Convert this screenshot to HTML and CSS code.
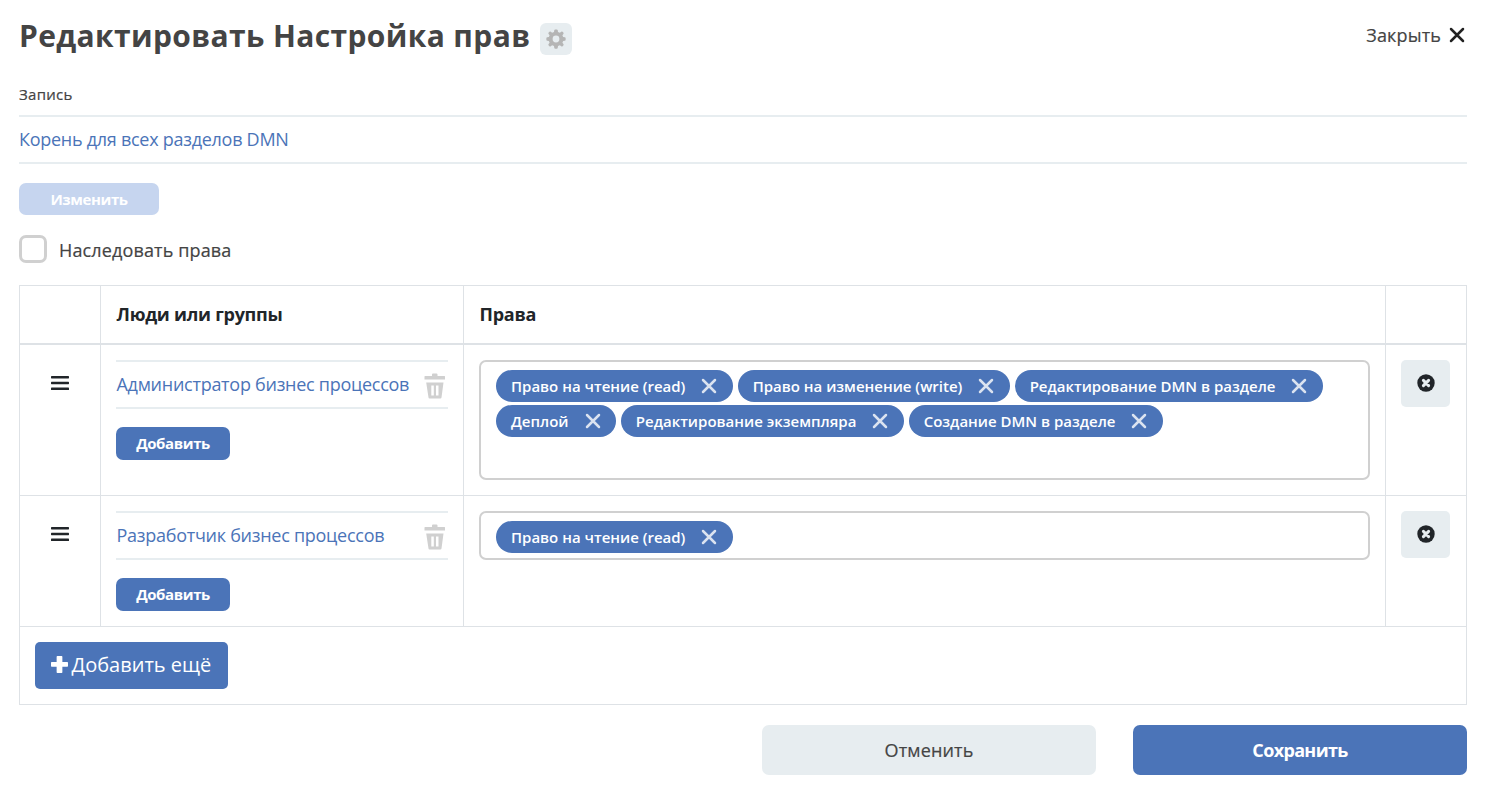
FILE: index.html
```html
<!DOCTYPE html>
<html lang="ru">
<head>
<meta charset="utf-8">
<title>Редактировать Настройка прав</title>
<link rel="stylesheet" href="styles.css">
</head>
<body>
<svg class="sprite" aria-hidden="true">
  <symbol id="i-gear" viewBox="0 0 24 24"><path fill-rule="evenodd" d="M10.100 2.500Q10.200 1.500 11.200 1.500H12.800Q13.800 1.500 13.900 2.500L14.200 4.300L16.200 5.100L17.700 4Q18.500 3.500 19.200 4.200L20 5Q20.600 5.700 20.100 6.500L19 8L19.800 9.900L21.600 10.200Q22.500 10.300 22.500 11.300V12.700Q22.500 13.700 21.600 13.800L19.800 14.100L19 16L20.100 17.500Q20.600 18.300 20 19L19.200 19.800Q18.500 20.500 17.700 20L16.200 18.900L14.200 19.700L13.900 21.500Q13.800 22.500 12.800 22.500H11.200Q10.200 22.500 10.100 21.500L9.800 19.700L7.800 18.900L6.300 20Q5.500 20.500 4.800 19.800L4 19Q3.400 18.300 3.900 17.500L5 16L4.200 14.100L2.400 13.800Q1.500 13.700 1.500 12.700V11.300Q1.500 10.300 2.400 10.200L4.200 9.900L5 8L3.900 6.500Q3.400 5.700 4 5L4.800 4.200Q5.500 3.500 6.300 4L7.800 5.100L9.800 4.300ZM12 8.300A3.700 3.700 0 1 0 12 15.700A3.700 3.700 0 1 0 12 8.300Z"/></symbol>
  <symbol id="i-x" viewBox="0 0 16 16"><path d="M2 2L14 14M14 2L2 14" fill="none" stroke="currentColor" stroke-width="2.500" stroke-linecap="round"/></symbol>
  <symbol id="i-bars" viewBox="0 0 18 16"><rect y="1" width="18" height="2.400" rx=".6"/><rect y="6.800" width="18" height="2.400" rx=".6"/><rect y="12.600" width="18" height="2.400" rx=".6"/></symbol>
  <symbol id="i-trash" viewBox="0 0 22 26"><path d="M1 3H8V1.500Q8 .5 9 .5H12.500Q13.500 .5 13.500 1.500V3H20.500Q21 3 21 3.500V6.500H.5V3.500Q.5 3 1 3Z"/><path fill-rule="evenodd" d="M2.200 9.500H19.500L17.500 24.500Q17.300 25.500 16.500 25.500H5.500Q4.600 25.500 4.500 24.500ZM7.300 12.500V22.500H9.800V12.500ZM12 12.500V22.500H14.500V12.500Z"/></symbol>
  <symbol id="i-remove" viewBox="0 0 18 18"><circle cx="9" cy="9" r="8.700"/><path d="M6.400 6.400L11.600 11.600M11.600 6.400L6.400 11.600" stroke="#e7edf0" stroke-width="3" stroke-linecap="round"/></symbol>
  <symbol id="i-plus" viewBox="0 0 16 16"><path d="M6 0H10Q10.700 0 10.700 .7V5.600H15.300Q16 5.600 16 6.300V9.400Q16 10.100 15.300 10.100H10.700V15.300Q10.700 16 10 16H6Q5.300 16 5.300 15.300V10.100H.7Q0 10.100 0 9.400V6.300Q0 5.600 .7 5.600H5.300V.7Q5.300 0 6 0Z"/></symbol>
</svg>
<main class="page">
  <header class="head">
    <h1 class="title">Редактировать Настройка прав</h1>
    <button class="gear"><svg><use href="#i-gear"/></svg></button>
    <a class="close"><span class="medium">Закрыть</span><svg><use href="#i-x"/></svg></a>
  </header>

  <div class="label medium">Запись</div>
  <div class="record"><a>Корень для всех разделов DMN</a></div>
  <button class="btn btn-disabled">Изменить</button>
  <label class="check"><span class="box"></span><span class="check-text medium">Наследовать права</span></label>

  <section class="table">
    <div class="row row-head">
      <div class="cell"></div>
      <div class="cell">Люди или группы</div>
      <div class="cell">Права</div>
      <div class="cell"></div>
    </div>
    <div class="row row-tall">
      <div class="cell cell-drag"><svg class="bars"><use href="#i-bars"/></svg></div>
      <div class="cell">
        <div class="person"><a>Администратор бизнес процессов</a><svg><use href="#i-trash"/></svg></div>
        <button class="btn btn-add">Добавить</button>
      </div>
      <div class="cell">
        <div class="tags tags-tall">
          <span class="tag">Право на чтение (read)<svg><use href="#i-x"/></svg></span>
          <span class="tag">Право на изменение (write)<svg><use href="#i-x"/></svg></span>
          <span class="tag">Редактирование DMN в разделе<svg><use href="#i-x"/></svg></span>
          <span class="tag">Деплой<svg><use href="#i-x"/></svg></span>
          <span class="tag">Редактирование экземпляра<svg><use href="#i-x"/></svg></span>
          <span class="tag">Создание DMN в разделе<svg><use href="#i-x"/></svg></span>
        </div>
      </div>
      <div class="cell"><button class="remove"><svg><use href="#i-remove"/></svg></button></div>
    </div>
    <div class="row row-short">
      <div class="cell cell-drag"><svg class="bars"><use href="#i-bars"/></svg></div>
      <div class="cell">
        <div class="person"><a>Разработчик бизнес процессов</a><svg><use href="#i-trash"/></svg></div>
        <button class="btn btn-add">Добавить</button>
      </div>
      <div class="cell">
        <div class="tags"><span class="tag">Право на чтение (read)<svg><use href="#i-x"/></svg></span></div>
      </div>
      <div class="cell"><button class="remove"><svg><use href="#i-remove"/></svg></button></div>
    </div>
    <div class="row-more">
      <button class="more"><svg><use href="#i-plus"/></svg><span>Добавить ещё</span></button>
    </div>
  </section>

  <footer class="actions">
    <button class="action cancel medium">Отменить</button>
    <button class="action save">Сохранить</button>
  </footer>
</main>
</body>
</html>
```
FILE: styles.css
```css
* { box-sizing: border-box; }
body {
  margin: 0;
  background: #fff;
  color: #444;
  font-family: "Open Sans", "Noto Sans", sans-serif;
  font-size: 18px;
}
button { border: 0; padding: 0; font: inherit; }
svg { display: block; flex: none; fill: currentColor; }
.sprite { display: none; }
.page { padding: 0 20px 0 19px; }
.medium { letter-spacing: .14px; -webkit-text-stroke: .2px currentColor; }

.head { display: flex; align-items: flex-start; height: 85px; padding-top: 15px; }
.title { width: 510px; margin: 0; font-size: 30px; line-height: 42px; font-weight: 700; letter-spacing: .37px; white-space: nowrap; }
.gear {
  display: flex; align-items: center; justify-content: center;
  width: 32px; height: 32px; margin: 8px 0 0 11px;
  border-radius: 6px; background: #e7edf0; color: #b5b5b5;
}
.gear svg { width: 22px; height: 22px; }
.close { display: flex; align-items: center; gap: 8px; margin-left: auto; padding-right: 2px; line-height: 40px; }
.close svg { width: 16px; height: 16px; color: #222; }

.label { height: 30px; font-size: 15px; line-height: 18px; letter-spacing: .28px; }
.record {
  height: 49px; border-top: 2px solid #e7edf0; border-bottom: 2px solid #e7edf0;
  line-height: 45px; color: #4b74b8;
}
.record a, .person a { letter-spacing: -.27px; }
.btn { display: block; border-radius: 7px; background: #4b74b8; color: #fff; font-size: 15px; font-weight: 700; letter-spacing: -.4px; }
.btn-disabled { width: 140px; height: 32px; margin-top: 19px; background: #c6d5ef; }
.check { display: flex; align-items: center; gap: 12px; height: 28px; margin: 20px 0 22px; }
.box { width: 28px; height: 28px; border: 3px solid #d0d0d0; border-radius: 7px; }
.check-text { line-height: 28px; padding-top: 2px; }

.table { border: 1px solid #dee2e6; }
.row { display: grid; grid-template-columns: 81px 363px 922px 80px; border-bottom: 1px solid #dee2e6; }
.row-head { height: 59px; border-bottom-width: 2px; color: #212529; font-weight: 700; letter-spacing: -.26px; line-height: 26px; }
.row-tall { height: 151px; }
.row-short { height: 131px; }
.cell { padding: 15px; border-right: 1px solid #dee2e6; }
.row-head .cell { padding-left: 15.500px; }
.cell:last-child { border-right: 0; }
.cell-drag { display: flex; justify-content: center; color: #212529; }
.bars { width: 18px; height: 16px; margin-top: 15px; }
.person {
  display: flex; justify-content: space-between; height: 49px; margin-bottom: 18px; padding: 0 2px 0 .5px;
  border-top: 2px solid #e7edf0; border-bottom: 2px solid #e7edf0;
  line-height: 45px; color: #4b74b8; white-space: nowrap;
}
.person svg { width: 22px; height: 26px; margin-top: 10.500px; color: #d0d0d0; }
.btn-add { width: 114px; height: 33px; padding-bottom: 2px; }

.tags {
  display: flex; flex-wrap: wrap; align-content: flex-start; gap: 3px 5px;
  height: 49px; padding: 8px 15px;
  border: 2px solid #d0d0d0; border-radius: 7px;
}
.tags-tall { height: 120px; }
.tag {
  display: flex; align-items: center; gap: 16px; height: 32px; padding: 0 15.300px 0 15px;
  border-radius: 16px; background: #4b74b8; color: #fff;
  font-size: 15px; font-weight: 600; white-space: nowrap;
}
.tag svg { width: 16px; height: 16px; opacity: .8; }
.remove {
  display: flex; justify-content: center; width: 49px; height: 47px; padding-top: 14px;
  border-radius: 5px; background: #e7edf0; color: #212529;
}
.remove svg { width: 18px; height: 18px; }
.row-more { height: 77px; padding: 15px; }
.more {
  display: flex; align-items: center; gap: 4px; width: 193px; height: 47px; padding: 0 0 2px 15.500px;
  border-radius: 5px; background: #4b74b8; color: #fff; font-size: 20px; white-space: nowrap;
}
.more svg { width: 17px; height: 17px; }

.actions { display: flex; justify-content: flex-end; gap: 37px; margin-top: 20px; }
.action { width: 334px; height: 50px; border-radius: 7px; }
.cancel { background: #e7edf0; color: #444; }
.save { background: #4b74b8; color: #fff; font-weight: 700; letter-spacing: -.65px; }
```
